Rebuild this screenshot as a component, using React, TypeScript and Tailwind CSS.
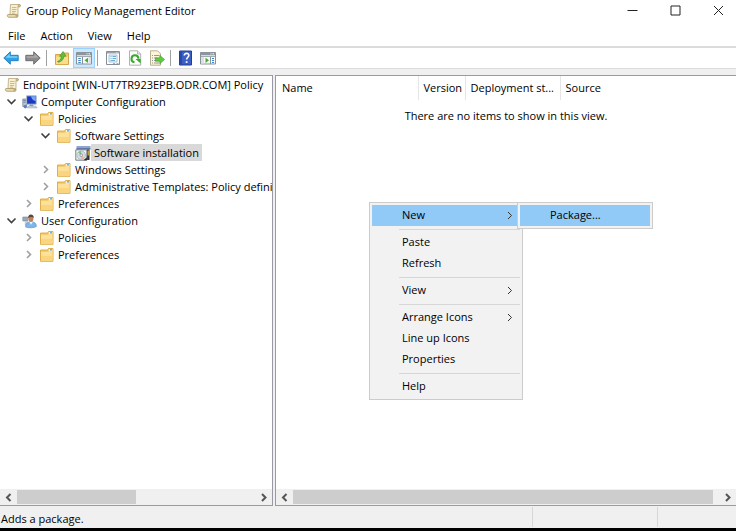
import type { ReactNode } from "react";
import clsx from "clsx";

type TreeItem = {
  label: string;
  icon: "policy" | "computer" | "user" | "folder" | "software";
  indent: string;
  open?: boolean;
  selected?: boolean;
};

const tree: TreeItem[] = [
  { label: "Endpoint [WIN-UT7TR923EPB.ODR.COM] Policy", icon: "policy", indent: "pl-1" },
  { label: "Computer Configuration", icon: "computer", indent: "pl-[3px]", open: true },
  { label: "Policies", icon: "folder", indent: "pl-5", open: true },
  { label: "Software Settings", icon: "folder", indent: "pl-[37px]", open: true },
  { label: "Software installation", icon: "software", indent: "pl-[75px]", selected: true },
  { label: "Windows Settings", icon: "folder", indent: "pl-[37px]", open: false },
  { label: "Administrative Templates: Policy defini", icon: "folder", indent: "pl-[37px]", open: false },
  { label: "Preferences", icon: "folder", indent: "pl-5", open: false },
  { label: "User Configuration", icon: "user", indent: "pl-[3px]", open: true },
  { label: "Policies", icon: "folder", indent: "pl-5", open: false },
  { label: "Preferences", icon: "folder", indent: "pl-5", open: false },
];

const menuGroups = [
  [{ label: "New", sub: true, active: true }],
  [{ label: "Paste" }, { label: "Refresh" }],
  [{ label: "View", sub: true }],
  [{ label: "Arrange Icons", sub: true }, { label: "Line up Icons" }, { label: "Properties" }],
  [{ label: "Help" }],
] as { label: string; sub?: boolean; active?: boolean }[][];

function Chevron({ dir, className }: { dir: "left" | "right" | "down"; className?: string }) {
  const d = { left: "M7.5 2 4 5.5 7.5 9", right: "M4 2l3.5 3.5L4 9", down: "M1.5 3.5l4 4 4-4" }[dir];
  return (
    <svg viewBox="0 0 11 11" className={clsx("size-[11px] shrink-0", className)} fill="none" stroke="currentColor">
      <path d={d} />
    </svg>
  );
}

function ScrollIcon() {
  return (
    <svg viewBox="0 0 16 16" className="size-4 shrink-0">
      <path d="M4.5 1.5h9c1.2 0 1.5 2 .2 2.3H12v7.7H4z" fill="#f8efcf" stroke="#b5a77c" strokeWidth=".8" />
      <path d="M12 3.8V2.2c.4-1 2.4-.8 2.3.5 0 .8-.8 1.1-2.3 1.1z" fill="#d5c28a" stroke="#a8986a" strokeWidth=".6" />
      <path d="M1.8 11.5h8.400c-.6 1.200 0 2.800 1 2.800H3c-1.600 0-2.200-1.900-1.200-2.800z" fill="#eadba8" stroke="#a8986a" strokeWidth=".8" />
      <path d="M10.200 11.500h1.900c.9.8.4 2.800-.9 2.800-1 0-1.600-1.600-1-2.800z" fill="#bda972" />
      <path d="M6 4.500h4.500M6 6.500h4.500M6 8.500h4M6 10.200h3" stroke="#c3b58c" strokeWidth=".9" />
    </svg>
  );
}

function FolderIcon() {
  return (
    <svg viewBox="0 0 16 16" className="size-4 shrink-0">
      <path d="M1.500 3h7l1-1.500h4.500v12.800H1.500z" fill="#f2c763" stroke="#dba93f" strokeWidth=".9" />
      <path d="M9.800 2.200h3.700v1.600H9.800z" fill="#fff" />
      <path d="M11 2.200h2v1.400h-2z" fill="#4d9fd8" />
      <path d="M2 4.800h7l1-.9h3.600v9.900H2z" fill="#fde09a" />
      <path d="M2.200 9h11.200v4.800H2.200z" fill="#fad57e" />
    </svg>
  );
}

function ComputerIcon() {
  return (
    <svg viewBox="0 0 16 16" className="size-4 shrink-0">
      <path d="M.8 5h3.800v7.500H.8z" fill="#b9c4d3" stroke="#7889a1" strokeWidth=".8" />
      <path d="M1.500 6.500h2.200M1.500 8.200h2.200" stroke="#53688a" strokeWidth=".7" />
      <path d="M4.600 1.800h9.600v8.400H4.600z" fill="#1a39c4" stroke="#b0bccc" />
      <path d="M9 2.300h4.700v4.900C11 6.600 9.600 4.900 9 2.300z" fill="#7ba5f2" />
      <path d="M8 10.600h2.800l.8 1.500H7.200z" fill="#8d99aa" />
      <path d="M6.200 12.200h7.600l1.200 1.600H5.400z" fill="#dbe1e9" stroke="#8592a6" strokeWidth=".6" />
      <circle cx="3.300" cy="12.600" r="1.800" fill="#5f83b9" />
    </svg>
  );
}

function UserIcon() {
  return (
    <svg viewBox="0 0 16 16" className="size-4 shrink-0">
      <path d="M.8 4h5v4h-5z" fill="#9aa7b6" stroke="#78869a" strokeWidth=".6" />
      <path d="M2.800 8h3v4h-3z" fill="#c3cbd6" />
      <path d="M3.600 14c-.2-3.600 2.200-5.200 5.400-5.200 3.500 0 5.600 1.800 5.400 4.700-2 1.500-8.600 1.700-10.800.5z" fill="#7fb5ea" stroke="#5590cc" strokeWidth=".6" />
      <path d="M7.300 9l1.700 2.700L10.800 9z" fill="#f1f6fb" />
      <ellipse cx="8.900" cy="5.700" rx="2.500" ry="3.100" fill="#bd8258" />
      <path d="M6.100 5.200C5.900 2.700 7.200 1.400 8.900 1.400s3.200 1.300 2.800 3.700c-.8-1.300-3.600-1.700-5.600.1z" fill="#57483c" />
    </svg>
  );
}

function SoftwareIcon() {
  return (
    <svg viewBox="0 0 16 16" className="size-4 shrink-0">
      <path d="M1.500 1h14v2.800h-14z" fill="#8fa5cf" />
      <path d="M1.500 3.300h14v1.200h-14z" fill="#415b93" />
      <path d="M12 4.500h2.500V15H12z" fill="#303030" />
      <path d="M12.500 5.500h1.300v5h-1.300z" fill="#e3bd48" />
      <path d="M.8 4.800h11v10.400H.8z" fill="#f4f4f4" stroke="#66757c" strokeWidth=".9" />
      <circle cx="6.200" cy="10.200" r="4.300" fill="#d3dedf" stroke="#9aa8ab" strokeWidth=".6" />
      <path d="M6.200 10.200 3 7.300a4.300 4.300 0 0 1 3.200-1.400z" fill="#79c58a" />
      <path d="M6.200 10.200l3.300 2.700a4.300 4.300 0 0 1-3.300 1.600z" fill="#efb2a2" />
      <circle cx="6.200" cy="10.200" r="1.300" fill="#fff" stroke="#667" strokeWidth=".6" />
      <path d="M8.500 15.200l3.300-3v3z" fill="#222" />
    </svg>
  );
}

const treeIcons = {
  policy: <ScrollIcon />,
  computer: <ComputerIcon />,
  user: <UserIcon />,
  folder: <FolderIcon />,
  software: <SoftwareIcon />,
};

function ArrowIcon({ forward }: { forward?: boolean }) {
  return (
    <svg viewBox="0 0 16 16" className={clsx("size-4", forward && "-scale-x-100")}>
      <path
        d="M.8 8 7.300 1.800v3.500h7.900v5.400H7.300v3.500z"
        fill={forward ? "#8b8b8b" : "#2ba3e6"}
        stroke={forward ? "#666" : "#1c79bd"}
        strokeWidth=".9"
      />
      <path d="M2.500 7.700 6.600 3.800v2.400h7.800v1.500z" fill={forward ? "#acacac" : "#7dd0f7"} />
    </svg>
  );
}

function FolderUpIcon() {
  return (
    <svg viewBox="0 0 16 16" className="size-4">
      <path d="M1.500 4.500h7l1-1.500h5v11.500h-13z" fill="#f2c763" stroke="#cf9f3f" strokeWidth=".9" />
      <path d="M2 6.500h12v7.600H2z" fill="#fbdc8c" />
      <path d="M3.500 11.500c2.500-.8 3.700-2.800 3.900-5.200H5.500L9 1.500l3 4.800h-2.100c-.3 3.600-2.800 5.500-5.700 5.900z" fill="#5cc13c" stroke="#34911f" strokeWidth=".6" />
    </svg>
  );
}

function PaneIcon({ right }: { right?: boolean }) {
  return (
    <svg viewBox="0 0 16 16" className="size-4">
      <path d="M.5 2.500h15v11.500H.5z" fill="#f7f8f9" stroke="#8a9199" />
      <path d="M.5 2.500h15v2.800H.5z" fill="#8d969f" />
      <path d="M10.500 3.800h1M12.500 3.800h1.500" stroke="#fff" />
      <path d="M1 6.500h14" stroke="#a3aab2" />
      {right ? (
        <>
          <path d="M10.500 7v7" stroke="#8a9199" />
          <path d="M1 7h3v6.500H1z" fill="#dde1e6" />
          <path d="M12 8.500h2M12 10.500h2M12 12.500h2" stroke="#3a87cf" />
          <path d="M5.500 7.800l3.500 2.500-3.500 2.600z" fill="#3eb02c" />
        </>
      ) : (
        <>
          <path d="M6.500 7v7" stroke="#8a9199" />
          <path d="M12.500 7h2.500v6.500h-2.500z" fill="#dde1e6" />
          <path d="M2.300 8.500h2.500M2.300 10.500h2.500M2.300 12.500h2.500" stroke="#3a87cf" />
          <path d="M12 7.800l-3.500 2.500 3.500 2.600z" fill="#3eb02c" />
        </>
      )}
    </svg>
  );
}

function PropertiesIcon() {
  return (
    <svg viewBox="0 0 16 16" className="size-4">
      <path d="M1.500 1.500h13v13h-13z" fill="#fff" stroke="#878e95" />
      <path d="M2 2h12v1.500H2z" fill="#9aa1a9" />
      <path d="M11 2.800h.8M12.500 2.800h.8" stroke="#fff" strokeWidth=".8" />
      <path d="M4 5h8v7H4z" fill="#eef5fb" stroke="#9fb4c8" strokeWidth=".8" />
      <path d="M5.500 6.500h1M7.500 6.500H11M5.500 8.500h1M7.500 8.500H11M5.500 10.500H10" stroke="#58a6d6" strokeWidth=".9" />
      <path d="M8 13.500h2M11.500 13.500h2" stroke="#8f979f" strokeWidth=".8" />
    </svg>
  );
}

function RefreshIcon() {
  return (
    <svg viewBox="0 0 16 16" className="size-4">
      <path d="M2.500.8h8l3.200 3.200v11.200H2.500z" fill="#fdfdfd" stroke="#a8a8a8" strokeWidth=".9" />
      <path d="M10.500.8V4h3.200" fill="#e6e6e6" stroke="#a8a8a8" strokeWidth=".8" />
      <path d="M7.500 12.300a3.500 3.500 0 1 1 4-3.600" fill="none" stroke="#38ab2b" strokeWidth="2" />
      <path d="M8.500 9h5.200v4.500z" fill="#38ab2b" />
    </svg>
  );
}

function ExportIcon() {
  return (
    <svg viewBox="0 0 16 16" className="size-4">
      <path d="M1.500.8h7l3 3v11.400h-10z" fill="#fcf5d8" stroke="#b1a88a" strokeWidth=".9" />
      <path d="M3 5.500h1M5 5.500h5M3 8h1M5 8h3M3 10.500h1M5 10.500h3M3 13h1M5 13h5" stroke="#8d8d8d" strokeWidth=".9" />
      <path d="M6.500 7.800h4.300V5.300L15.500 9.500l-4.700 4.200v-2.500H6.500z" fill="#62c745" stroke="#389e25" strokeWidth=".6" />
    </svg>
  );
}

function HelpIcon() {
  return (
    <svg viewBox="0 0 16 16" className="size-4">
      <path d="M1.500 1h12v14h-12z" fill="#3b5fc4" stroke="#243f93" />
      <path d="M2 1.500h2v13H2z" fill="#284aa8" />
      <path d="M6.300 5.600c0-3 4.800-2.900 4.500 0-.2 1.700-2.200 1.700-2.200 4" fill="none" stroke="#fff" strokeWidth="1.600" />
      <path d="M7.700 11.200h1.800v1.700H7.700z" fill="#fff" />
    </svg>
  );
}

function ToolButton({ label, active, children }: { label: string; active?: boolean; children: ReactNode }) {
  return (
    <button
      type="button"
      aria-label={label}
      className={clsx("grid h-5 w-[22px] place-items-center", active && "border border-[#99d1ff] bg-[#cce8ff]")}
    >
      {children}
    </button>
  );
}

function ToolSeparator() {
  return <div className="mr-1 ml-0.5 h-4 w-px bg-[#a0a0a0]" />;
}

function WindowButton({ label, children }: { label: string; children: ReactNode }) {
  return (
    <button type="button" aria-label={label} className="grid h-5 place-items-center">
      <svg viewBox="0 0 11 11" className="size-[11px]" fill="none" stroke="#222">
        {children}
      </svg>
    </button>
  );
}

function ScrollBar({ thumb }: { thumb: string }) {
  return (
    <div className="flex h-4 shrink-0 items-center bg-[#f0f0f0] text-[#555]">
      <button type="button" aria-label="Scroll left" className="grid w-[17px] place-items-center">
        <Chevron dir="left" className="stroke-2" />
      </button>
      <div className="h-[14px] flex-1">
        <div className={clsx("h-full bg-[#cdcdcd]", thumb)} />
      </div>
      <button type="button" aria-label="Scroll right" className="grid w-[17px] place-items-center">
        <Chevron dir="right" className="stroke-2" />
      </button>
    </div>
  );
}

function TreeRow({ item }: { item: TreeItem }) {
  return (
    <li className={clsx("flex h-[17px] items-center whitespace-nowrap", item.indent)}>
      {item.open !== undefined && (
        <button type="button" aria-label={`Toggle ${item.label}`} className="mr-[3px] grid w-4 shrink-0 place-items-center">
          <Chevron
            dir={item.open ? "down" : "right"}
            className={item.open ? "stroke-[1.6] text-[#404040]" : "stroke-[1.6] text-[#a0a0a0]"}
          />
        </button>
      )}
      {treeIcons[item.icon]}
      <span className={clsx("px-[3px] leading-[17px]", item.selected && "bg-[#d9d9d9]")}>{item.label}</span>
    </li>
  );
}

function ContextMenu() {
  return (
    <div role="menu" className="absolute top-[126px] left-[93px] w-[154px] border border-[#ccc] bg-[#f2f2f2] p-0.5">
      {menuGroups.map((group, index) => (
        <div key={group[0].label} role="group">
          {index > 0 && (
            <div className="ml-[27px] flex h-1.5 items-center">
              <div className="h-px w-full bg-[#d7d7d7]" />
            </div>
          )}
          {group.map((item) => (
            <button
              key={item.label}
              type="button"
              role="menuitem"
              className={clsx(
                "flex h-[21px] w-full items-center justify-between pr-[5px] pb-px pl-[30px] text-left",
                item.active && "bg-[#91c9f7]",
              )}
            >
              {item.label}
              {item.sub && <Chevron dir="right" className="text-[#333]" />}
            </button>
          ))}
        </div>
      ))}
      <div role="menu" className="absolute -top-px left-[147px] w-[136px] border border-[#ccc] bg-[#f2f2f2] p-0.5">
        <button type="button" role="menuitem" className="flex h-[21px] w-full items-center bg-[#91c9f7] pb-px pl-[30px]">
          Package...
        </button>
      </div>
    </div>
  );
}

export default function App() {
  return (
    <div className="flex h-screen flex-col overflow-hidden border-b-[3px] border-black bg-[#f0f0f0] font-['Open_Sans',sans-serif] text-[11px] leading-4 text-black">
      <header className="bg-white">
        <div className="flex h-6 items-start gap-8 pr-3">
          <div className="flex h-[22px] flex-1 items-center gap-1 pl-1.5">
            <ScrollIcon />
            <h1>Group Policy Management Editor</h1>
          </div>
          <WindowButton label="Minimize">
            <path d="M.5 5.500h10" />
          </WindowButton>
          <WindowButton label="Maximize">
            <path d="M1 1h9v9H1z" />
          </WindowButton>
          <WindowButton label="Close">
            <path d="M1 1l9 9M10 1l-9 9" />
          </WindowButton>
        </div>
        <nav className="flex h-[22px] items-center gap-[15px] pt-0.5 pl-2">
          {["File", "Action", "View", "Help"].map((name) => (
            <button key={name} type="button">{name}</button>
          ))}
        </nav>
        <div className="flex items-center border-t-2 border-b border-[#dcdcdc]">
          <ToolButton label="Back"><ArrowIcon /></ToolButton>
          <ToolButton label="Forward"><ArrowIcon forward /></ToolButton>
          <ToolSeparator />
          <ToolButton label="Up one level"><FolderUpIcon /></ToolButton>
          <ToolButton label="Show console tree" active><PaneIcon /></ToolButton>
          <ToolSeparator />
          <ToolButton label="Properties"><PropertiesIcon /></ToolButton>
          <ToolButton label="Refresh"><RefreshIcon /></ToolButton>
          <ToolButton label="Export list"><ExportIcon /></ToolButton>
          <ToolSeparator />
          <ToolButton label="Help"><HelpIcon /></ToolButton>
          <ToolButton label="Show action pane"><PaneIcon right /></ToolButton>
        </div>
      </header>

      <main className="mt-1.5 flex min-h-0 flex-1 gap-0.5">
        <section className="flex w-[273px] shrink-0 flex-col border-y border-r border-[#9a9aa6] bg-white">
          <ul className="flex-1">
            {tree.map((item, index) => (
              <TreeRow key={index} item={item} />
            ))}
          </ul>
          <ScrollBar thumb="w-1/2" />
        </section>

        <section className="relative flex min-w-0 flex-1 flex-col border-y border-l border-[#9a9aa6] bg-white">
          <table className="w-full table-fixed text-left">
            <thead>
              <tr className="h-6">
                <th className="w-[142px] border-r border-[#e5e5e5] pl-1.5 font-normal">Name</th>
                <th className="w-[47px] border-r border-[#e5e5e5] pl-[5px] font-normal">Version</th>
                <th className="w-[95px] border-r border-[#e5e5e5] pl-[5px] font-normal">Deployment st...</th>
                <th className="pl-[5px] font-normal">Source</th>
              </tr>
            </thead>
            <tbody>
              <tr>
                <td colSpan={4} className="pt-2 text-center">There are no items to show in this view.</td>
              </tr>
            </tbody>
          </table>
          <div className="flex-1" />
          <ScrollBar thumb="mr-1.5" />
          <ContextMenu />
        </section>
      </main>

      <footer className="flex h-[22px] shrink-0 items-center">
        <p className="flex-1 pt-1 pl-px">Adds a package.</p>
        <div className="h-5 w-[125px] border-l border-[#d7d7d7]" />
        <div className="h-5 w-[79px] border-l border-[#d7d7d7]" />
      </footer>
    </div>
  );
}
